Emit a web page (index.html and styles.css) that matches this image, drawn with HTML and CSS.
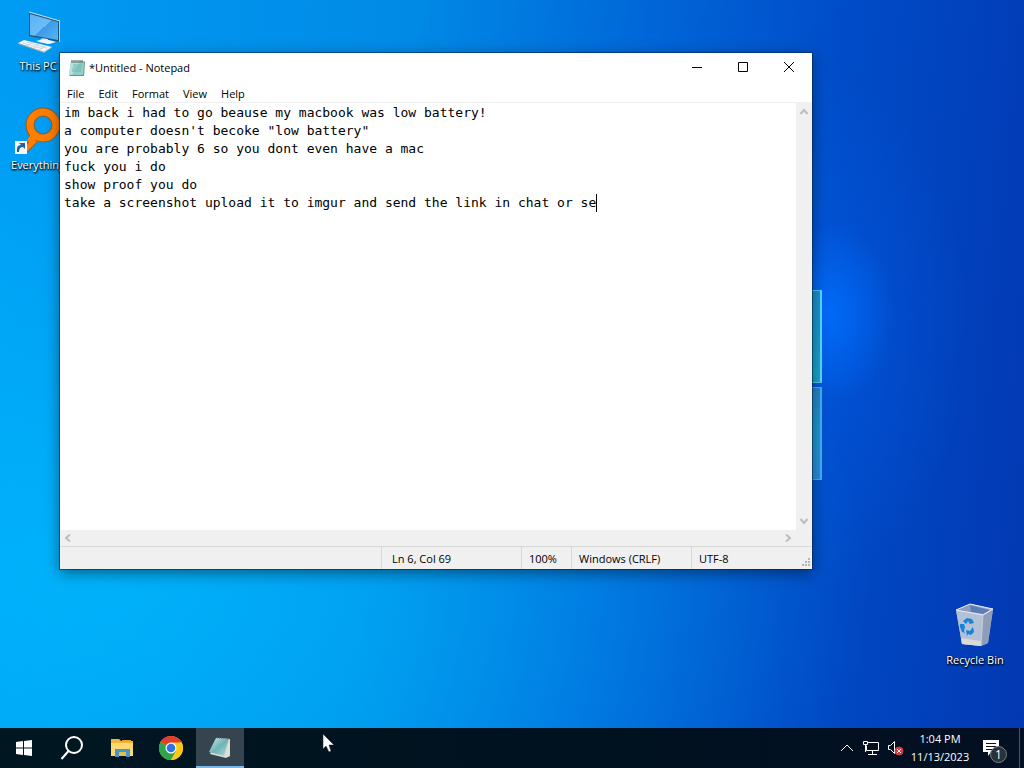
FILE: index.html
```html
<!DOCTYPE html>
<html lang="en">
<head>
	<meta charset="utf-8">
	<title>*Untitled - Notepad</title>
	<link rel="stylesheet" href="styles.css">
</head>
<body>
<div class="desktop">
	<div class="logo">
		<span class="pane"></span>
		<span class="pane pane-low"></span>
	</div>

	<div class="icons">
		<a class="icon" href="#">
			<svg width="48" height="48" viewBox="0 0 48 48">
				<defs>
					<linearGradient id="screen" x1="0" y1="0" x2="1" y2="1">
						<stop offset="0" stop-color="#5ab4f2"/>
						<stop offset="0.5" stop-color="#6cbdf6"/>
						<stop offset="0.5" stop-color="#3d9ae6"/>
						<stop offset="1" stop-color="#55b4f5"/>
					</linearGradient>
				</defs>
				<path d="M15 4l31 9v21l-31-6z" fill="#235379"/>
				<path d="M16 6l28 8v18l-28-5z" fill="url(#screen)"/>
				<path d="M15 4l31 9" stroke="#c9e9fa"/>
				<path d="M45 13l1 0v21l-1 0z" fill="#d9c9a4"/>
				<path d="M28 30l6 1v2l7 1-5 2-12-2z" fill="#b4cfdf"/>
				<path d="M22 33l9-2 11 3-8 2z" fill="#eef6fa"/>
				<path d="M4 35l6-3 28 7-8 5z" fill="#f4f7f8"/>
				<path d="M4 35l26 9 8-5v1l-8 5-26-9z" fill="#9aabb5"/>
				<path d="M9 35l20 6M13 34l20 6M13 38l6-4M19 40l6-4M25 42l6-4" stroke="#ccd6dc" fill="none"/>
			</svg>
			<span>This PC</span>
		</a>
		<a class="icon" href="#">
			<svg width="48" height="48" viewBox="0 0 48 48">
				<path d="M10 41l10-13 5 5-12 12z" fill="#ff7e00" stroke="#9a5a1c"/>
				<circle cx="29" cy="18" r="13" fill="none" stroke="#8a5a2c" stroke-width="9"/>
				<circle cx="29" cy="18" r="13" fill="none" stroke="#ff7e00" stroke-width="7"/>
				<path d="M18 26l5 5-6 6-4-4z" fill="#ff7e00"/>
				<path d="M1 34h12v13h-12z" fill="#f6f6f6"/>
				<path d="M3 45q-1-7 4-7l-2-2h6v6l-2-2q-4 0-4 5z" fill="#1f5ea8"/>
			</svg>
			<span>Everything</span>
		</a>
	</div>

	<div class="icons icons-end">
		<a class="icon" href="#">
			<svg width="48" height="48" viewBox="0 0 48 48">
				<path d="M5 8l14-6 23 5-5 34-7 3-19-2z" fill="#a9b7cc"/>
				<path d="M5 8l27 5-2 31-19-2z" fill="#b4c0d3"/>
				<path d="M32 13l10-6-5 34-7 3z" fill="#8f9db8"/>
				<path d="M7 8l12-5 20 5-7 4z" fill="#5f7cb6"/>
				<path d="M7 8l12-5 1 7z" fill="#8c9fc2"/>
				<path d="M10 36l20 3v5l-19-2z" fill="#d9dad9"/>
				<path d="M5 8l14-6 23 5-10 6z" fill="none" stroke="#e7eef6"/>
				<path d="M32 13l-2 31" stroke="#c2cddd"/>
				<g fill="#1583dc">
					<path d="M12 19l4-3 5 1 2 4-4 1-2-3-2 3z"/>
					<path d="M9 22l4 0 1 3-1 4 1 2-3-1-2-5z"/>
					<path d="M15 28l4 1 3-4 1 5-3 3-3-1-1 2z"/>
				</g>
			</svg>
			<span>Recycle Bin</span>
		</a>
	</div>

	<div class="window">
		<div class="titlebar">
			<svg width="18" height="18" viewBox="0 0 18 18">
				<path d="M3 2l13 0-1 14-14 0z" fill="#8fcfc6"/>
				<path d="M3 2l9 0-8 14-3 0z" fill="#b5e2db"/>
				<path d="M16 2l1 1-1 14-14 0-1-1 14 0z" fill="#6b8f8c"/>
				<path d="M5 6h9M5 8h9M4 10h9M4 12h9" stroke="#6fb7ad"/>
				<path d="M4 1v3M6 1v3M8 1v3M10 1v3M12 1v3M14 1v3" stroke="#4c5f5e"/>
			</svg>
			<h1>*Untitled - Notepad</h1>
			<button class="winbtn" aria-label="Minimize"><svg width="12" height="12"><path d="M1 5.500h10" stroke="#000"/></svg></button>
			<button class="winbtn" aria-label="Maximize"><svg width="12" height="12"><path d="M1.500 0.500h9v9h-9z" fill="none" stroke="#000"/></svg></button>
			<button class="winbtn" aria-label="Close"><svg width="12" height="12"><path d="M1 0l10 10M11 0l-10 10" stroke="#000"/></svg></button>
		</div>
		<div class="menubar">
			<button>File</button>
			<button>Edit</button>
			<button>Format</button>
			<button>View</button>
			<button>Help</button>
		</div>
		<div class="editor">
			<div class="page">
				<textarea aria-label="Text editor" spellcheck="false" wrap="off">im back i had to go beause my macbook was low battery!
a computer doesn't becoke "low battery"
you are probably 6 so you dont even have a mac
fuck you i do
show proof you do
take a screenshot upload it to imgur and send the link in chat or se</textarea>
				<span class="caret"></span>
			</div>
			<div class="vscroll">
				<button aria-label="Scroll up"><svg width="10" height="10"><path d="M1.500 7l3.500-4 3.500 4"/></svg></button>
				<button aria-label="Scroll down"><svg width="10" height="10"><path d="M1.500 3l3.500 4 3.500-4"/></svg></button>
			</div>
		</div>
		<div class="hscroll">
			<button aria-label="Scroll left"><svg width="10" height="10"><path d="M7 1.500l-4 3.500 4 3.500"/></svg></button>
			<button aria-label="Scroll right"><svg width="10" height="10"><path d="M3 1.500l4 3.500-4 3.500"/></svg></button>
		</div>
		<div class="statusbar">
			<span class="pos">Ln 6, Col 69</span>
			<span class="zoom">100%</span>
			<span class="eol">Windows (CRLF)</span>
			<span class="enc">UTF-8</span>
			<svg class="grip" width="10" height="10" fill="#b4b4b4">
				<path d="M7 0h2v2h-2zM4 3h2v2h-2zM7 3h2v2h-2zM1 6h2v2h-2zM4 6h2v2h-2zM7 6h2v2h-2z"/>
			</svg>
		</div>
	</div>
</div>

<div class="taskbar">
	<button class="task" aria-label="Start">
		<svg width="16" height="16" viewBox="0 0 16 16" fill="#fff"><path d="M0 2l7-1v6.500h-7zM8 1l8-1v7.500h-8zM0 8.500h7v6.500l-7-1zM8 8.500h8v7.500l-8-1z"/></svg>
	</button>
	<button class="task" aria-label="Search">
		<svg width="24" height="24" viewBox="0 0 24 24" fill="none" stroke="#fff" stroke-width="2"><circle cx="14" cy="9" r="8"/><path d="M8.500 15l-7 8"/></svg>
	</button>
	<div class="apps">
		<button class="task" aria-label="File Explorer">
			<svg width="24" height="20" viewBox="0 0 24 20">
				<path d="M1 1h8l2 2h12v15h-22z" fill="#f3b73c"/>
				<path d="M1 5h22v13h-22z" fill="#ffd970"/>
				<path d="M12 2h9v2h-9z" fill="#e9a52c"/>
				<path d="M5 11h15v8h-4v-5h-7v5h-4z" fill="#4596ca"/>
				<path d="M9 14h7v4h-7z" fill="#e9bd4c"/>
			</svg>
		</button>
		<button class="task" aria-label="Chrome">
			<svg width="24" height="24" viewBox="0 0 24 24">
				<circle cx="12" cy="12" r="12" fill="#fbc916"/>
				<path d="M12 12L1.600 6A12 12 0 0 1 22.400 6z" fill="#e33b2e"/>
				<path d="M1.600 6A12 12 0 0 0 12 24L17.200 15 12 12z" fill="#2da44e"/>
				<path d="M12 6.500H22.700A12 12 0 0 1 12 24L17 15z" fill="#fbc916"/>
				<circle cx="12" cy="12" r="5.500" fill="#fff"/>
				<circle cx="12" cy="12" r="4.300" fill="#2f72e4"/>
			</svg>
		</button>
		<button class="task active" aria-label="Notepad">
			<svg width="24" height="24" viewBox="0 0 24 24">
				<defs>
					<linearGradient id="pad" x1="0" y1="0" x2="1" y2="1">
						<stop offset="0" stop-color="#cfeeee"/>
						<stop offset="0.5" stop-color="#6fb3b6"/>
						<stop offset="1" stop-color="#b5dfdc"/>
					</linearGradient>
				</defs>
				<path d="M9 2l13 1 0 17-4 2-16-4z" fill="#d8ddd8"/>
				<path d="M8 2l13 1-5 17-15-4z" fill="url(#pad)"/>
				<path d="M21 3l1 17-5 1z" fill="#e2ded0"/>
				<path d="M9 2l12 1" stroke="#6d7f80" stroke-dasharray="1 1"/>
			</svg>
		</button>
	</div>
	<div class="tray">
		<button aria-label="Show hidden icons"><svg width="14" height="10" viewBox="0 0 14 10"><path d="M1 8l6-6 6 6"/></svg></button>
		<button aria-label="Network"><svg width="18" height="16" viewBox="0 0 18 16"><path d="M6 2.500h10.500v8h-12v-5M10.500 11v3M6 14.500h9M1.500 1.500h4v3h-4zM3.500 5v7"/></svg></button>
		<button aria-label="Volume muted">
			<svg width="18" height="16" viewBox="0 0 18 16">
				<path d="M2.500 5.500h2l4-4v12l-4-4h-2z"/>
				<circle cx="13" cy="11" r="4" class="mute"/>
				<path d="M11 9l4 4M15 9l-4 4"/>
			</svg>
		</button>
	</div>
	<button class="clock"><time>1:04 PM</time><time>11/13/2023</time></button>
	<button class="notify" aria-label="Notifications">
		<svg width="18" height="18" viewBox="0 0 18 18"><path d="M1 1h16v12h-8l-3 4v-4h-5z" fill="#fff"/><path d="M4 4.500h10M4 7.500h10M4 10.500h7" stroke="#07131f"/></svg>
		<span class="badge">1</span>
	</button>
	<button class="peek" aria-label="Show desktop"></button>
</div>

<svg class="cursor" width="13" height="20" viewBox="0 0 13 20"><path d="M1 1v15l3-3 3 6 2-1-2-6h5z" fill="#fff" stroke="#222" stroke-width="0.500"/></svg>
</body>
</html>
```
FILE: styles.css
```css
*{
	box-sizing: border-box;
}
body{
	margin: 0;
	height: 100vh;
	display: flex;
	flex-direction: column;
	overflow: hidden;
	font: 11px/16px "Open Sans", "Noto Sans", sans-serif;
	color: #000;
}
button{
	margin: 0;
	padding: 0;
	border: 0;
	background: none;
	font: inherit;
	color: inherit;
}
svg{
	display: block;
}

/* wallpaper */
.desktop{
	flex: 1;
	position: relative;
	background:
		radial-gradient(ellipse 65px 90px at 81% 43%, rgba(0,112,255,0.8), transparent),
		radial-gradient(ellipse 160px 260px at 79% 45%, rgba(0,100,245,0.4), transparent),
		radial-gradient(ellipse 75% 70% at 10% 80%, rgba(0,190,255,0.7), transparent),
		linear-gradient(95deg, #009cf4 0%, #008ae6 38%, #0066d8 60%, #004cc8 78%, #0338b2 100%);
}
.logo{
	position: absolute;
	left: 640px;
	top: 290px;
	width: 182px;
	display: flex;
	flex-direction: column;
	gap: 4px;
}
.pane{
	height: 93px;
	background: linear-gradient(#1c8fcc, #1ba4c8);
	border: 1px solid #4cc8f0;
	border-right: 2px solid #50dcfa;
}
.pane-low{
	background: linear-gradient(#2a80c4, #1c9bca 45%, #2b8bd8);
	border-color: #40b0f4;
}
.icons{
	position: absolute;
	left: 0;
	top: 8px;
	width: 76px;
	display: flex;
	flex-direction: column;
	gap: 31px;
}
.icons-end{
	left: auto;
	right: 11px;
	top: auto;
	bottom: 58px;
}
.icon{
	display: flex;
	flex-direction: column;
	align-items: center;
	line-height: 20px;
	color: #fff;
	text-decoration: none;
	white-space: nowrap;
	text-shadow: 1px 1px 2px #000, 0 1px 2px #000;
}

/* notepad */
.window{
	position: absolute;
	left: 60px;
	right: 212px;
	top: 53px;
	bottom: 159px;
	display: flex;
	flex-direction: column;
	background: #fff;
	box-shadow: 0 0 0 1px rgba(0,40,80,0.6), 0 4px 14px rgba(0,0,0,0.45);
}
.titlebar{
	height: 30px;
	display: flex;
	align-items: center;
	padding-left: 8px;
}
.titlebar h1{
	flex: 1;
	margin: 0 0 0 3px;
	font-size: 11px;
	font-weight: normal;
}
.winbtn{
	width: 46px;
	height: 30px;
	display: flex;
	align-items: center;
	justify-content: center;
}
.menubar{
	height: 20px;
	display: flex;
	align-items: flex-end;
	border-bottom: 1px solid #f0f0f0;
}
.menubar button{
	padding: 0 7px;
}
.editor{
	flex: 1;
	display: flex;
	min-height: 0;
}
.page{
	flex: 1;
	position: relative;
	font: 13px/18px "DejaVu Sans Mono", monospace;
}
.page textarea{
	display: block;
	width: 100%;
	height: 100%;
	padding: 1px 4px;
	border: 0;
	outline: 0;
	resize: none;
	overflow: hidden;
	font: inherit;
	color: #000;
}
.caret{
	position: absolute;
	left: calc(4px + 68ch);
	top: 91px;
	width: 1px;
	height: 18px;
	background: #000;
}
.vscroll, .hscroll{
	display: flex;
	justify-content: space-between;
	background: #f0f0f0;
}
.vscroll{
	width: 16px;
	flex-direction: column;
}
.hscroll{
	height: 16px;
	padding-right: 16px;
}
.vscroll button, .hscroll button{
	width: 16px;
	height: 18px;
	display: flex;
	align-items: center;
	justify-content: center;
}
.hscroll button{
	height: 16px;
}
.vscroll svg, .hscroll svg{
	fill: none;
	stroke: #bdbdbd;
	stroke-width: 2;
}
.statusbar{
	height: 23px;
	display: flex;
	justify-content: flex-end;
	position: relative;
	background: #f0f0f0;
	border-top: 1px solid #d7d7d7;
	line-height: 24px;
}
.statusbar span{
	padding-left: 7px;
	border-left: 1px solid #d7d7d7;
}
.statusbar .pos{
	width: 140px;
	padding-left: 10px;
}
.zoom{
	width: 50px;
}
.eol{
	width: 120px;
}
.enc{
	width: 121px;
}
.grip{
	position: absolute;
	right: 1px;
	bottom: 1px;
}

/* taskbar */
.taskbar{
	height: 40px;
	display: flex;
	background: linear-gradient(90deg, #001722, #00121f 50%, #030f22);
	color: #fff;
}
.task{
	width: 48px;
	display: flex;
	align-items: center;
	justify-content: center;
}
.apps{
	flex: 1;
	display: flex;
	gap: 1px;
	padding-left: 2px;
}
.active{
	padding-top: 2px;
	background: #35444f;
	border-bottom: 2px solid #76b9ed;
}
.tray{
	display: flex;
	align-items: center;
}
.tray button{
	width: 24px;
	display: flex;
	justify-content: center;
}
.tray svg{
	fill: none;
	stroke: #fff;
}
.tray .mute{
	fill: #d83b3b;
	stroke: #d83b3b;
}
.clock{
	width: 66px;
	display: flex;
	flex-direction: column;
	align-items: center;
	justify-content: center;
	line-height: 18px;
}
.notify{
	position: relative;
	width: 46px;
	padding-left: 9px;
}
.badge{
	position: absolute;
	left: 17px;
	top: 18px;
	width: 17px;
	height: 17px;
	border: 1px solid #77808a;
	border-radius: 50%;
	background: #2a3138;
	font-size: 12px;
	line-height: 15px;
}
.peek{
	width: 5px;
	border-left: 1px solid #4a5462;
}
.cursor{
	position: absolute;
	left: 322px;
	top: 733px;
}
```
